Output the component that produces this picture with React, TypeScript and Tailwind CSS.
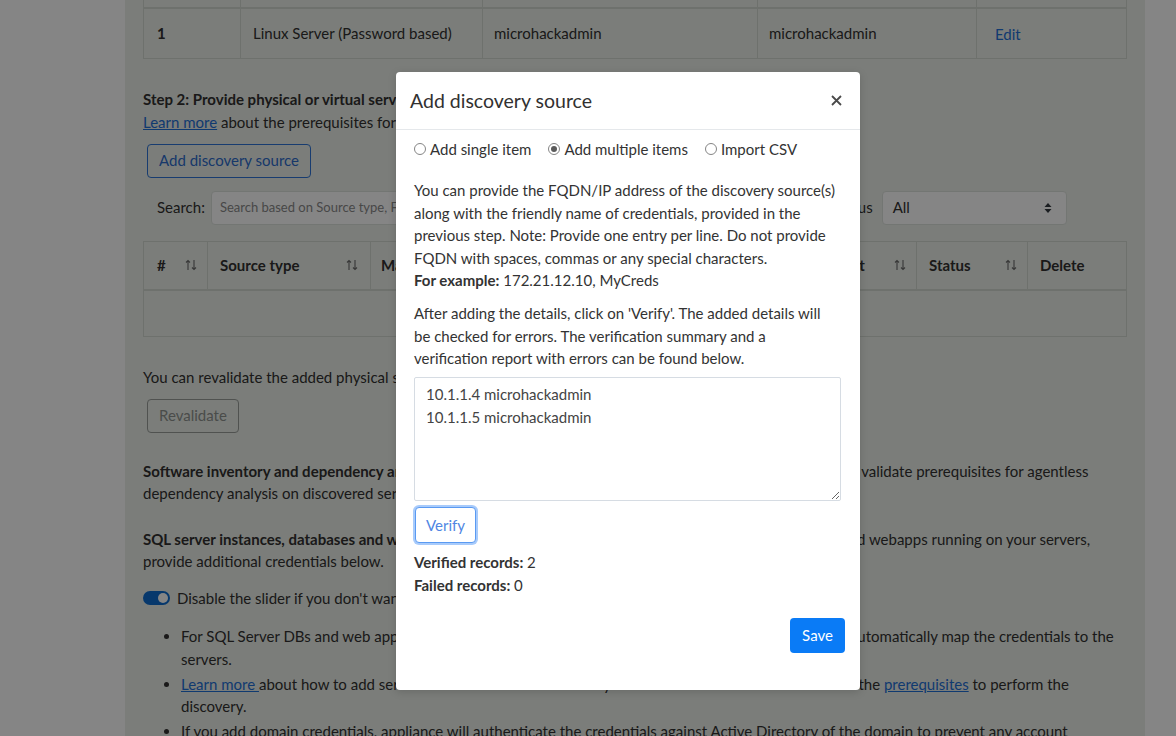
import React from 'react';

function SortIcon() {
  return (
    <svg width="12" height="12" viewBox="0 0 12 12" fill="none" stroke="currentColor" strokeWidth="1.1" className="text-[#6b6b6b]">
      <path d="M3 11V1.5M1 3.5l2-2 2 2" />
      <path d="M9 1v9.5M7 8.5l2 2 2-2" />
    </svg>
  );
}

function Radio({ checked, label }: { checked?: boolean; label: string }) {
  return (
    <label className="flex items-center">
      <span className="flex h-[12px] w-[12px] items-center justify-center rounded-full border border-[#858585] bg-white">
        {checked && <span className="h-[6px] w-[6px] rounded-full bg-[#5a5a5a]" />}
      </span>
      <span className="ml-[4px]">{label}</span>
    </label>
  );
}

function Modal() {
  return (
    <div className="absolute left-[396px] top-[72px] w-[464px] rounded-[4px] bg-white text-[#333] shadow-[0_2px_8px_rgba(0,0,0,0.15)]">
      {/* Header */}
      <div className="flex h-[58px] items-center justify-between border-b border-[#e5e8eb] pl-[14px] pr-[18px]">
        <h2 className="pt-[1px] text-[19.5px] text-[#323130]">Add discovery source</h2>
        <svg width="11" height="11" viewBox="0 0 11 11" stroke="#4a4a4a" strokeWidth="1.8">
          <path d="M1 1l9 9M10 1l-9 9" />
        </svg>
      </div>

      {/* Body */}
      <div className="px-[18px] pb-[37px] pt-[8px] text-[15px] leading-[22.5px]">
        <div className="flex items-center gap-[17px]">
          <Radio label="Add single item" />
          <Radio checked label="Add multiple items" />
          <Radio label="Import CSV" />
        </div>

        <p className="mt-[18.5px] whitespace-nowrap">
          You can provide the FQDN/IP address of the discovery source(s)
          <br />
          along with the friendly name of credentials, provided in the
          <br />
          previous step. Note: Provide one entry per line. Do not provide
          <br />
          FQDN with spaces, commas or any special characters.
          <br />
          <b>For example:</b> 172.21.12.10, MyCreds
        </p>

        <p className="mt-[10.5px] whitespace-nowrap">
          After adding the details, click on 'Verify'. The added details will
          <br />
          be checked for errors. The verification summary and a
          <br />
          verification report with errors can be found below.
        </p>

        <textarea
          readOnly
          defaultValue={'10.1.1.4 microhackadmin\n10.1.1.5 microhackadmin'}
          className="mt-[7.5px] block h-[124px] w-[427px] rounded-[2px] border border-[#d6dce3] px-[11px] pt-[5px] text-[15px] leading-[22.5px] text-[#444] outline-none"
        />

        <button className="mt-[6px] ml-[1px] block h-[36px] w-[61px] rounded-[4px] border border-[#5a9af2] bg-white pt-[1px] text-[#4f86e3] shadow-[0_0_0_2px_#a8cbfb]">
          Verify
        </button>

        <p className="mt-[8px]">
          <b>Verified records:</b> 2
        </p>
        <p>
          <b>Failed records:</b> 0
        </p>

        <div className="-mr-[3px] mt-[22px] flex justify-end">
          <button className="h-[35px] w-[55px] rounded-[4px] bg-[#0a7bf6] text-white">Save</button>
        </div>
      </div>
    </div>
  );
}

export default function App() {
  const cell = 'border-r border-[#d3d8d2]';
  return (
    <div className="relative h-[736px] w-full overflow-hidden bg-white font-['Lato',sans-serif] text-[15px] leading-[22.5px] text-[#323130]">
      <div className="ml-[125px] h-full w-[1020px] bg-[#ebf0ea] px-[18px]">
        {/* Credentials table (scrolled) */}
        <div className="border-l border-[#d3d8d2]">
          <div className="grid h-[9px] grid-cols-[97px_242px_275px_219px_1fr] border-b-2 border-[#d3d8d2]">
            <div className={cell} />
            <div className={cell} />
            <div className={cell} />
            <div className={cell} />
            <div className={cell} />
          </div>
          <div className="grid h-[50px] grid-cols-[97px_242px_275px_219px_1fr] items-stretch border-b border-[#d3d8d2]">
            <div className={`${cell} flex items-center pl-[13px] font-bold`}>1</div>
            <div className={`${cell} flex items-center pl-[12px]`}>Linux Server (Password based)</div>
            <div className={`${cell} flex items-center pl-[11px]`}>microhackadmin</div>
            <div className={`${cell} flex items-center pl-[11px]`}>microhackadmin</div>
            <div className={`${cell} flex items-center pl-[18px] pt-[2px] text-[#1f6fd6]`}>Edit</div>
          </div>
        </div>

        {/* Step 2 */}
        <p className="mt-[29px] font-bold">Step 2: Provide physical or virtual server details</p>
        <p>
          <span className="text-[#1f6fd6] underline">Learn more</span> about the prerequisites for server discovery.
        </p>
        <button className="ml-[4px] mt-[10.5px] h-[34px] rounded-[4px] border border-[#2e74d6] px-[11px] text-[#2e6ccc]">
          Add discovery source
        </button>

        <div className="mt-[13px] flex h-[34px] items-center">
          <span className="ml-[14px]">Search:</span>
          <div className="ml-[6px] flex h-[34px] w-[610px] items-center rounded-[4px] border border-[#dde2dc] bg-white pl-[8px] text-[13px] text-[#8a8a8a]">
            Search based on Source type, FQDN/IP address or credentials
          </div>
          <span className="ml-[11px]">Status</span>
          <div className="ml-[9px] flex h-[34px] w-[185px] items-center justify-between rounded-[4px] border border-[#dde2dc] bg-white pl-[10px] pr-[14px]">
            <span>All</span>
            <svg width="8" height="12" viewBox="0 0 8 12">
              <path d="M4 1L7.5 5H0.5z M4 11L0.5 7h7z" fill="#343a40" />
            </svg>
          </div>
        </div>

        {/* Discovery sources table */}
        <div className="mt-[16px] border-l border-t border-[#d3d8d2]">
          <div className="grid h-[49px] grid-cols-[64px_163px_230px_223px_93px_111px_1fr] border-b-2 border-[#d3d8d2] font-bold">
            <div className={`${cell} flex items-center justify-between pl-[13px] pr-[10px]`}>
              <span>#</span>
              <SortIcon />
            </div>
            <div className={`${cell} flex items-center justify-between pl-[12px] pr-[12px]`}>
              <span>Source type</span>
              <SortIcon />
            </div>
            <div className={`${cell} flex items-center justify-between pl-[10px] pr-[12px]`}>
              <span>Machine name/IP</span>
              <SortIcon />
            </div>
            <div className={`${cell} flex items-center justify-between pl-[12px] pr-[12px]`}>
              <span>Credentials</span>
              <SortIcon />
            </div>
            <div className={`${cell} flex items-center justify-between pl-[12px] pr-[10px]`}>
              <span>Port</span>
              <SortIcon />
            </div>
            <div className={`${cell} flex items-center justify-between pl-[12px] pr-[10px]`}>
              <span>Status</span>
              <SortIcon />
            </div>
            <div className={`${cell} flex items-center pl-[12px]`}>Delete</div>
          </div>
          <div className="h-[46px] border-b border-r border-[#d3d8d2]" />
        </div>

        <p className="mt-[29px]">You can revalidate the added physical servers after the changes are made.</p>
        <button className="ml-[4px] mt-[10.5px] h-[34px] rounded-[4px] border border-[#9a9e9a] px-[11px] text-[#8f938f]">
          Revalidate
        </button>

        <p className="mt-[27px] whitespace-nowrap">
          <b>Software inventory and dependency analysis:</b> Use the server credentials you provided in the previous step to validate prerequisites for agentless
          <br />
          dependency analysis on discovered servers.
        </p>

        <p className="mt-[23px] whitespace-nowrap">
          <b>SQL server instances, databases and web apps:</b> To discover and assess all SQL Server instances, databases and webapps running on your servers,
          <br />
          provide additional credentials below.
        </p>

        <div className="mt-[14px] flex items-center">
          <span className="flex h-[14px] w-[27px] items-center justify-end rounded-full bg-[#0f6cd0] pr-[2px]">
            <span className="h-[10px] w-[10px] rounded-full bg-white" />
          </span>
          <span className="ml-[7px]">Disable the slider if you don't want to discover SQL Server instances and web apps.</span>
        </div>

        <ul className="mt-[16px] list-disc pl-[38px]">
          <li className="whitespace-nowrap">
            For SQL Server DBs and web apps, you can provide multiple credentials and the appliance will seek to automatically map the credentials to the
            <br />
            servers.
          </li>
          <li className="mt-[2.5px] whitespace-nowrap">
            <span className="text-[#1f6fd6] underline">Learn more </span>about how to add server credentials for this discovery. Make sure that the credentials meet the{' '}
            <span className="text-[#1f6fd6] underline">prerequisites</span> to perform the
            <br />
            discovery.
          </li>
          <li className="mt-[2.5px]">
            If you add domain credentials, appliance will authenticate the credentials against Active Directory of the domain to prevent any account
            lockouts.
          </li>
        </ul>
      </div>

      <div className="absolute inset-0 bg-black/[0.48]" />
      <Modal />
    </div>
  );
}
